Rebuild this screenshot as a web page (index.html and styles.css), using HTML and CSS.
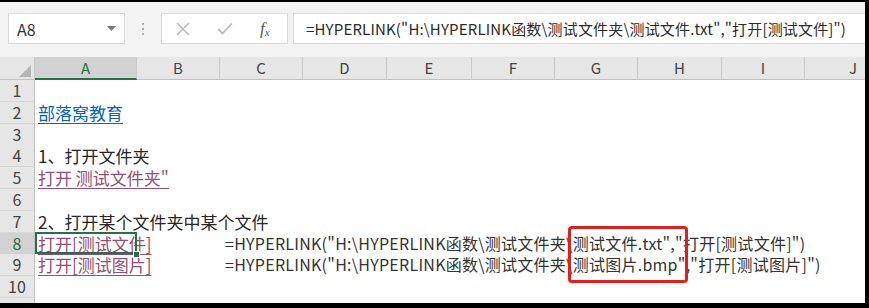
FILE: index.html
```html
<!DOCTYPE html>
<html lang="zh-CN">
<head>
<meta charset="utf-8">
<title>HYPERLINK</title>
<link rel="stylesheet" href="styles.css">
</head>
<body>
<div class="frame">
  <div class="toolbar">
    <div class="namebox">
      <span class="ref">A8</span>
      <svg class="caret" width="9" height="6" viewBox="0 0 9 6"><path d="M0 0 H9 L4.5 5 Z" fill="#7a7a7a"/></svg>
    </div>
    <div class="dots"><i></i><i></i><i></i></div>
    <div class="btns">
      <svg class="btn-x" width="14" height="14" viewBox="0 0 14 14"><path d="M1 1 L13 13 M13 1 L1 13" stroke="#bdbdbd" stroke-width="1.6" fill="none"/></svg>
      <svg class="btn-ok" width="16" height="13" viewBox="0 0 16 13"><path d="M1 7 L5.5 11.5 L15 1.5" stroke="#bdbdbd" stroke-width="1.8" fill="none"/></svg>
      <span class="fx">f<sub>x</sub></span>
    </div>
    <div class="formula">=HYPERLINK("H:\HYPERLINK函数\测试文件夹\测试文件.txt","打开[测试文件]")</div>
  </div>
  <div class="sheet">
    <div class="row head">
      <div class="corner"><svg width="12" height="12" viewBox="0 0 12 12"><path d="M12 0 V12 H0 Z" fill="#b4b4b4"/></svg></div>
      <div class="ch sel">A</div><div class="ch">B</div><div class="ch">C</div><div class="ch">D</div><div class="ch">E</div><div class="ch">F</div><div class="ch">G</div><div class="ch">H</div><div class="ch">I</div><div class="ch last">J</div>
    </div>
    <div class="row"><div class="rh">1</div></div>
    <div class="row"><div class="rh">2</div><div class="cell link">部落窝教育</div></div>
    <div class="row"><div class="rh">3</div></div>
    <div class="row"><div class="rh">4</div><div class="cell">1、打开文件夹</div></div>
    <div class="row"><div class="rh">5</div><div class="cell visited">打开 测试文件夹"</div></div>
    <div class="row"><div class="rh">6</div></div>
    <div class="row"><div class="rh">7</div><div class="cell">2、打开某个文件夹中某个文件</div></div>
    <div class="row"><div class="rh rsel">8</div><div class="cell visited active">打开[测试文件]</div><div class="cell colc">=HYPERLINK("H:\HYPERLINK函数\测试文件夹\测试文件.txt","打开[测试文件]")</div></div>
    <div class="row"><div class="rh">9</div><div class="cell visited">打开[测试图片]</div><div class="cell colc">=HYPERLINK("H:\HYPERLINK函数\测试文件夹\测试图片.bmp","打开[测试图片]")</div></div>
    <div class="row"><div class="rh">10</div></div>
    <div class="row"><div class="rh">11</div></div>
    <div class="mark"></div>
  </div>
</div>
</body>
</html>
```
FILE: styles.css
```css
html, body { margin: 0; padding: 0; }
body {
  width: 869px; height: 308px; overflow: hidden; background: #000;
  font-family: "Noto Sans CJK SC", "Noto Sans", sans-serif;
}
.frame {
  box-sizing: border-box; width: 869px; height: 308px;
  border-top: 2px solid #000; border-right: 4px solid #000; border-bottom: 5px solid #000;
  background: #fff; display: flex; flex-direction: column; overflow: hidden;
}
.toolbar {
  height: 55px; flex: none; background: #f3f3f3; box-sizing: border-box;
  display: flex; align-items: flex-start; padding: 11px 0 0 8px;
}
.namebox {
  width: 117px; height: 31px; box-sizing: border-box; background: #fff;
  border: 1px solid #dadada; display: flex; align-items: center; justify-content: space-between;
  padding: 0 8px 0 8px;
}
.ref { font-size: 16px; color: #333; }
.caret { margin-top: 1px; }
.dots { width: 36px; height: 31px; display: flex; flex-direction: column; align-items: center; justify-content: center; gap: 3px; }
.dots i { width: 2px; height: 2px; background: #b0b0b0; display: block; }
.btns {
  width: 127px; height: 31px; box-sizing: border-box; background: #fff; border: 1px solid #dadada;
  display: flex; align-items: center; padding-left: 14px;
}
.btn-x { margin-right: 27px; }
.btn-ok { margin-right: 27px; }
.fx { font-family: "Liberation Serif", serif; font-style: italic; font-size: 17px; color: #555; }
.fx sub { font-size: 11px; vertical-align: -2px; }
.formula {
  flex: 1; height: 31px; box-sizing: border-box; background: #fff; margin-left: 5px;
  border: 1px solid #dadada; border-right: 0; padding-left: 12px;
  font-size: 15px; letter-spacing: 0.17px; line-height: 29px; color: #2b2b2b; white-space: nowrap; overflow: hidden;
}
.sheet { position: relative; flex: 1; }
.row {
  display: grid; grid-template-columns: 35px 102px 83px 83px 84px 85px 83px 83px 84px 83px 60px;
  height: 21.8px;
}
.row.head { height: 23px; background: #e6e6e6; border-bottom: 1px solid #c0c0c0; box-sizing: border-box; }
.corner { display: flex; align-items: flex-end; justify-content: flex-end; padding: 0 3px 3px 0; border-right: 1px solid #c8c8c8; }
.ch {
  font-size: 15px; color: #444; text-align: center; line-height: 22px;
  border-right: 1px solid #cacaca; box-sizing: border-box;
}
.ch.last { border-right: 0; text-align: left; padding-left: 44px; }
.ch.sel { background: #d2d2d2; color: #217346; border-bottom: 2px solid #217346; line-height: 21px; }
.rh {
  background: #e6e6e6; border-right: 1px solid #c0c0c0; border-bottom: 1px solid #d6d6d6;
  box-sizing: border-box; font-size: 16px; color: #444; text-align: center; line-height: 21px;
}
.rh.rsel { background: #d2d2d2; color: #217346; }
.cell {
  white-space: nowrap; font-size: 17px; line-height: 21px; color: #262626; padding-left: 3px;
}
.link { color: #0563c1; text-decoration: underline; text-underline-offset: 3px; text-decoration-thickness: 1px; }
.visited { color: #954f72; text-decoration: underline; text-underline-offset: 3px; text-decoration-thickness: 1px; }
.colc { grid-column: 4; font-size: 16px; letter-spacing: 0.26px; padding-left: 5px; color: #333; }
.active { position: relative; }
.active::after {
  content: ""; position: absolute; left: 0; top: -1px; width: 102px; height: 22px;
  box-sizing: border-box; border: 2px solid #217346;
}
.active::before {
  content: ""; position: absolute; left: 98px; top: 18px; width: 5px; height: 5px;
  background: #217346; border: 1px solid #fff; z-index: 2;
}
.mark {
  position: absolute; left: 568px; top: 169px; width: 120px; height: 57px;
  box-sizing: border-box; border: 3px solid #e0201c; border-radius: 4px;
}
```
